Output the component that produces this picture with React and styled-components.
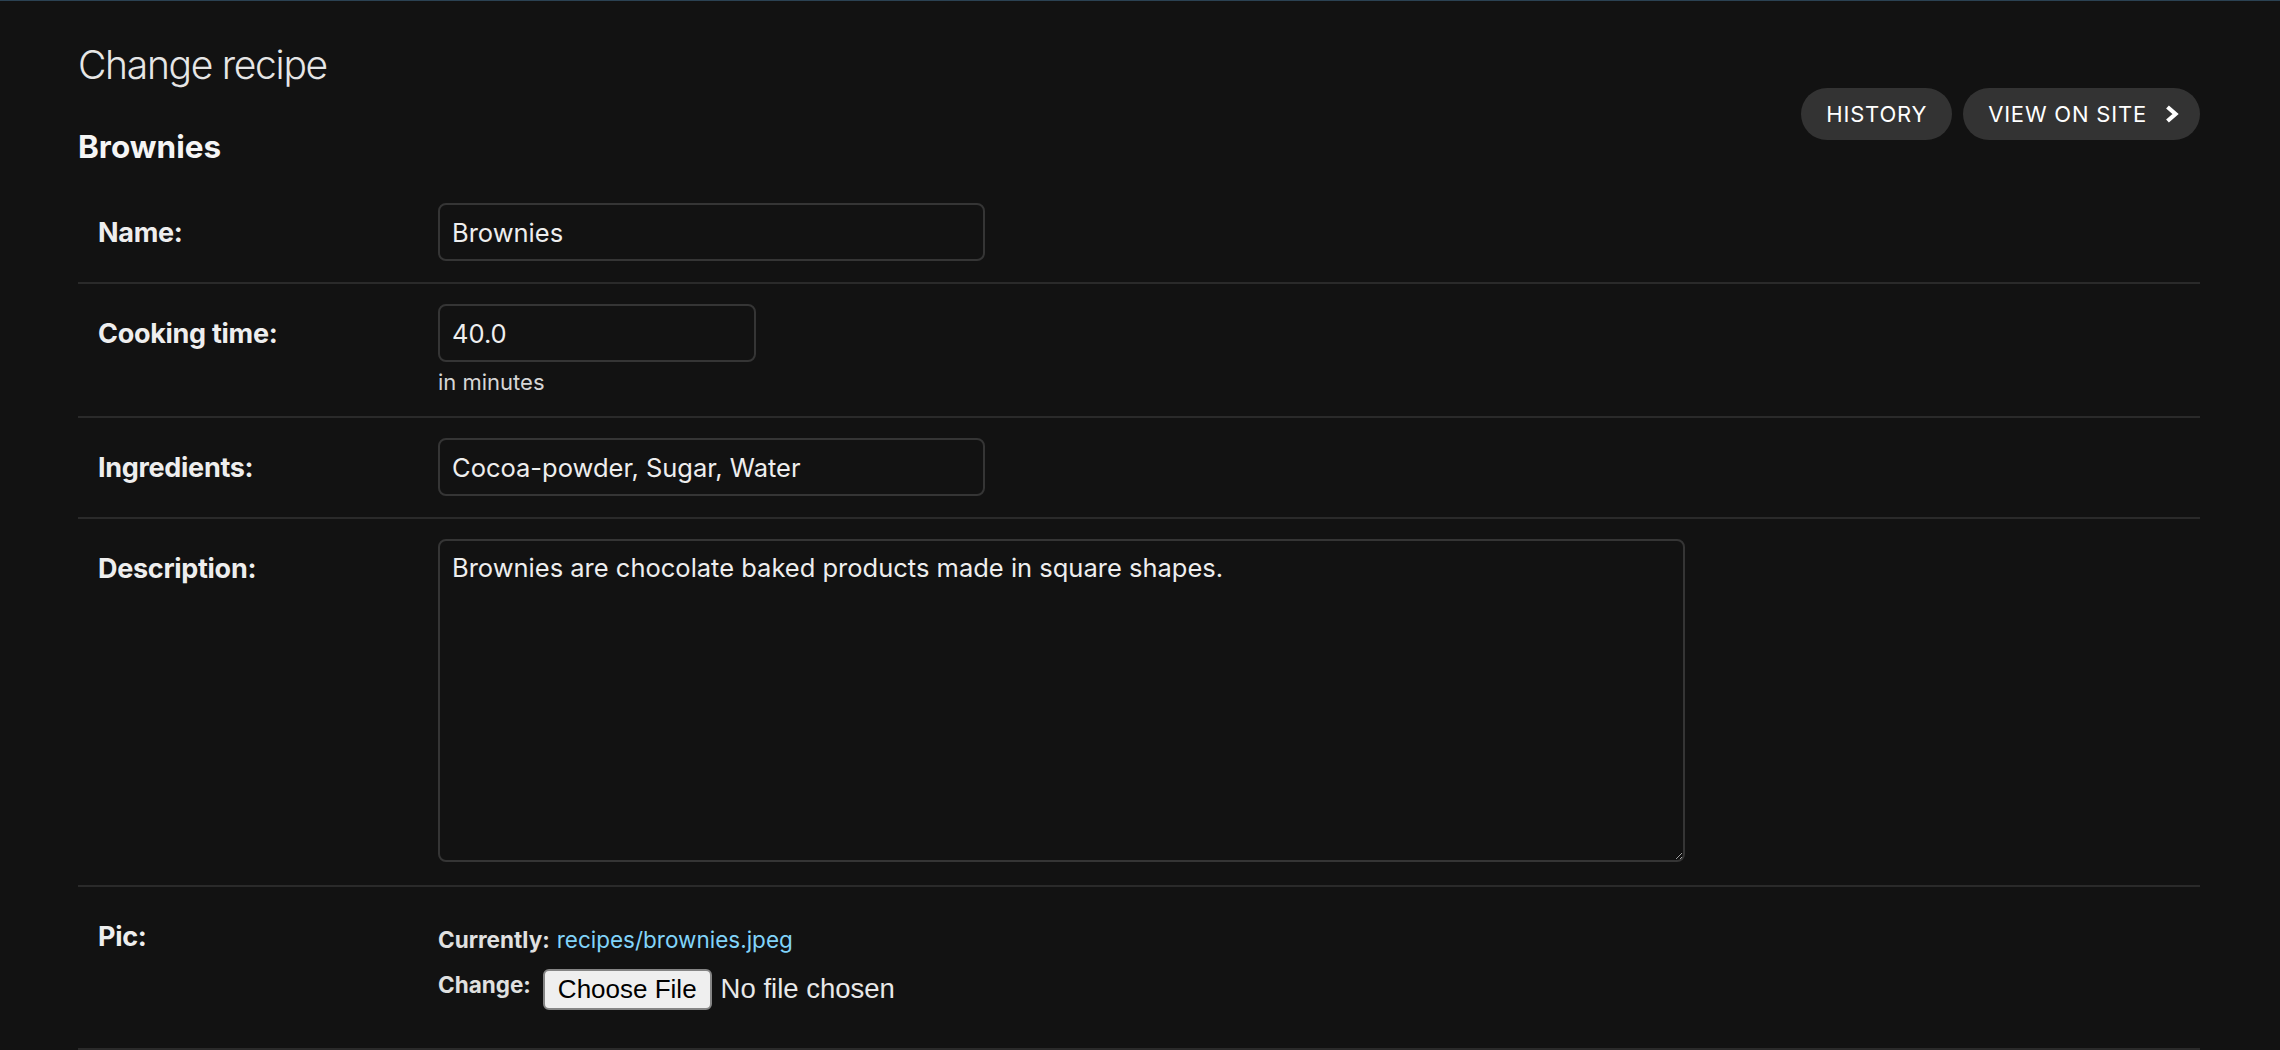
import React from "react";
import styled, { createGlobalStyle } from "styled-components";

const GlobalStyle = createGlobalStyle`
  html, body {
    margin: 0;
    padding: 0;
    background: #121212;
    color: #eeeeee;
    font-family: Inter, "Noto Sans", "Liberation Sans", sans-serif;
  }
  * { box-sizing: border-box; }
`;

const HeaderEdge = styled.div`
  height: 1px;
  background: #2b4253;
`;

const Content = styled.main`
  padding: 40px 80px 0 78px;
`;

const TopBar = styled.div`
  display: flex;
  justify-content: space-between;
  align-items: flex-start;
`;

const TitleBlock = styled.div`
  display: flex;
  flex-direction: column;
`;

const PageTitle = styled.h1`
  margin: 0;
  font-size: 39px;
  line-height: 48px;
  font-weight: 300;
  color: #e6e6e6;
  letter-spacing: -1.3px;
`;

const ObjectName = styled.h2`
  margin: 40px 0 0;
  font-size: 31.5px;
  line-height: 36px;
  font-weight: 700;
  color: #f5f5f5;
  letter-spacing: 0;
`;

const ObjectTools = styled.ul`
  list-style: none;
  margin: 47px 0 0;
  padding: 0;
  display: flex;
  gap: 11px;
`;

const ToolLink = styled.a`
  display: inline-flex;
  align-items: center;
  gap: 16px;
  height: 52px;
  padding: 0 ${(p) => (p.$arrow ? "19px" : "25px")} 0 25px;
  border-radius: 26px;
  background: #333333;
  color: #ffffff;
  font-size: 22px;
  font-weight: 400;
  letter-spacing: 0.8px;
  text-transform: uppercase;
  text-decoration: none;
`;

const Fieldset = styled.section`
  margin-top: 18px;
`;

const FormRow = styled.div`
  display: flex;
  align-items: flex-start;
  padding: 20px 20px 21px;
  border-bottom: 2px solid #2a2a2a;
`;

const Label = styled.label`
  flex: 0 0 340px;
  padding: 13px 20px 0 0;
  font-size: 27px;
  line-height: 34px;
  font-weight: 700;
  color: #eeeeee;
  letter-spacing: -0.3px;
`;

const Field = styled.div`
  display: flex;
  flex-direction: column;
`;

const TextInput = styled.input`
  width: ${(p) => p.$width}px;
  height: 58px;
  padding: 10px 12px;
  border: 2px solid #353535;
  border-radius: 8px;
  background: #121212;
  color: #eeeeee;
  font-family: inherit;
  font-size: 25.5px;
  line-height: 34px;
  outline: none;
`;

const Help = styled.div`
  margin-top: 7px;
  font-size: 22px;
  line-height: 26px;
  color: #d6d6d6;
`;

const TextArea = styled.textarea`
  display: block;
  width: 1247px;
  height: 323px;
  margin: 0 0 2px;
  padding: 10px 12px;
  border: 2px solid #353535;
  border-radius: 8px;
  background: #121212;
  color: #eeeeee;
  color-scheme: dark;
  font-family: inherit;
  font-size: 25.5px;
  line-height: 34px;
  outline: none;
`;

const FileUpload = styled.div`
  display: flex;
  flex-direction: column;
  padding: 13px 0 17px;
`;

const FileLine = styled.div`
  display: flex;
  align-items: flex-start;
  font-size: 22.5px;
  line-height: 40px;
  color: #e0e0e0;
  margin-top: ${(p) => p.$top || 0}px;
`;

const FileKey = styled.span`
  font-weight: 700;
  padding-top: ${(p) => p.$pad || 0}px;
  line-height: ${(p) => (p.$pad ? "27px" : "40px")};
  margin-right: ${(p) => (p.$pad ? "12px" : "7px")};
`;

const FileLink = styled.a`
  color: #81d4fa;
  text-decoration: none;
`;

const FileControl = styled.div`
  display: flex;
  align-items: baseline;
  gap: 9px;
  font-family: "Liberation Sans", Arial, sans-serif;
`;

const ChooseButton = styled.button`
  height: 41px;
  padding: 4px 13px;
  border: 2px solid #858585;
  border-radius: 6px;
  background: #efefef;
  color: #000000;
  font-family: "Liberation Sans", Arial, sans-serif;
  font-size: 26px;
  line-height: 29px;
`;

const NoFile = styled.span`
  font-size: 27.5px;
  color: #e8e8e8;
`;

function Chevron() {
  return (
    <svg width="18" height="18" viewBox="0 0 18 18" aria-hidden="true">
      <path
        d="M4.5 2 L12.5 9 L4.5 16"
        fill="none"
        stroke="#ffffff"
        strokeWidth="4.2"
        strokeLinecap="butt"
        strokeLinejoin="miter"
      />
    </svg>
  );
}

export default function App() {
  return (
    <>
      <GlobalStyle />
      <HeaderEdge />
      <Content>
        <TopBar>
          <TitleBlock>
            <PageTitle>Change recipe</PageTitle>
            <ObjectName>Brownies</ObjectName>
          </TitleBlock>
          <ObjectTools>
            <li>
              <ToolLink href="#">History</ToolLink>
            </li>
            <li>
              <ToolLink href="#" $arrow>
                View on site
                <Chevron />
              </ToolLink>
            </li>
          </ObjectTools>
        </TopBar>
        <Fieldset>
          <FormRow>
            <Label htmlFor="id_name">Name:</Label>
            <Field>
              <TextInput id="id_name" $width={547} defaultValue="Brownies" />
            </Field>
          </FormRow>
          <FormRow>
            <Label htmlFor="id_cooking_time">Cooking time:</Label>
            <Field>
              <TextInput id="id_cooking_time" $width={318} defaultValue="40.0" />
              <Help>in minutes</Help>
            </Field>
          </FormRow>
          <FormRow>
            <Label htmlFor="id_ingredients">Ingredients:</Label>
            <Field>
              <TextInput
                id="id_ingredients"
                $width={547}
                defaultValue="Cocoa-powder, Sugar, Water"
              />
            </Field>
          </FormRow>
          <FormRow>
            <Label htmlFor="id_description">Description:</Label>
            <Field>
              <TextArea
                id="id_description"
                defaultValue="Brownies are chocolate baked products made in square shapes."
              />
            </Field>
          </FormRow>
          <FormRow>
            <Label htmlFor="id_pic">Pic:</Label>
            <FileUpload>
              <FileLine>
                <FileKey>Currently:</FileKey>
                <FileLink href="#">recipes/brownies.jpeg</FileLink>
              </FileLine>
              <FileLine $top={9}>
                <FileKey $pad={2}>Change:</FileKey>
                <FileControl>
                  <ChooseButton type="button">Choose File</ChooseButton>
                  <NoFile>No file chosen</NoFile>
                </FileControl>
              </FileLine>
            </FileUpload>
          </FormRow>
        </Fieldset>
      </Content>
    </>
  );
}
